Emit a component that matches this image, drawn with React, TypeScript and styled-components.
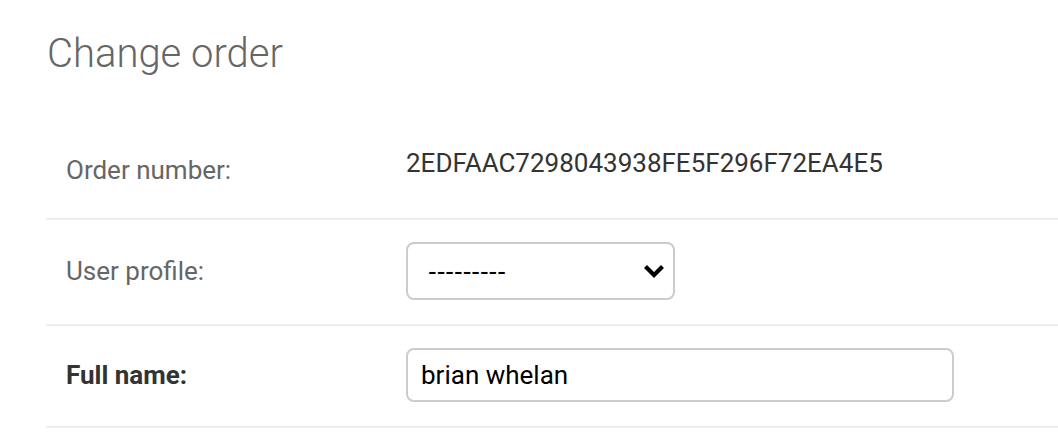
import React from "react";
import styled, { createGlobalStyle } from "styled-components";

const Global = createGlobalStyle`
  html, body { margin: 0; padding: 0; background: #fff; }
  body { font-family: Roboto, "Liberation Sans", sans-serif; }
`;

const Page = styled.div`
  padding: 28px 0 0 46px;
  overflow: hidden;
`;

const Title = styled.h1`
  margin: 0 0 60px 1px;
  font-size: 40px;
  font-weight: 300;
  color: #666;
  line-height: 52px;
`;

const Row = styled.div`
  display: flex;
  align-items: center;
  padding: 22px 20px 24px;
  border-bottom: 2px solid #eee;
`;

const ReadOnlyRow = styled(Row)`
  align-items: flex-start;
  padding: 7px 20px 32px;
`;

const Label = styled.label<{ $required?: boolean; $offset?: number }>`
  flex: 0 0 320px;
  margin-right: 20px;
  margin-top: ${(p) => p.$offset ?? 0}px;
  font-size: 26px;
  line-height: 32px;
  color: ${(p) => (p.$required ? "#333" : "#666")};
  font-weight: ${(p) => (p.$required ? 700 : 400)};
`;

const ReadOnly = styled.div`
  font-size: 26px;
  line-height: 32px;
  color: #333;
`;

const SelectBox = styled.div`
  position: relative;
  width: 269px;
  height: 58px;
  box-sizing: border-box;
  border: 2px solid #ccc;
  border-radius: 8px;
  display: flex;
  align-items: center;
  padding: 0 20px;
  font-size: 26px;
  color: #000;
  font-family: "Liberation Sans", Arial, sans-serif;
`;

const Chevron = styled.svg`
  position: absolute;
  right: 8px;
  top: 50%;
  margin-top: -7px;
`;

const TextInput = styled.div`
  width: 548px;
  height: 54px;
  box-sizing: border-box;
  border: 2px solid #ccc;
  border-radius: 8px;
  display: flex;
  align-items: center;
  padding: 0 13px;
  font-size: 26px;
  color: #000;
`;

export default function App() {
  return (
    <>
      <Global />
      <Page>
        <Title>Change order</Title>
        <div>
          <ReadOnlyRow>
            <Label $offset={7}>Order number:</Label>
            <ReadOnly>2EDFAAC7298043938FE5F296F72EA4E5</ReadOnly>
          </ReadOnlyRow>
          <Row>
            <Label>User profile:</Label>
            <SelectBox>
              ---------
              <Chevron width="22" height="14" viewBox="0 0 22 14">
                <path d="M2.5 2.5 L11 11 L19.5 2.5" stroke="#000" strokeWidth="4.2" fill="none" />
              </Chevron>
            </SelectBox>
          </Row>
          <Row>
            <Label $required>Full name:</Label>
            <TextInput>brian whelan</TextInput>
          </Row>
        </div>
      </Page>
    </>
  );
}
